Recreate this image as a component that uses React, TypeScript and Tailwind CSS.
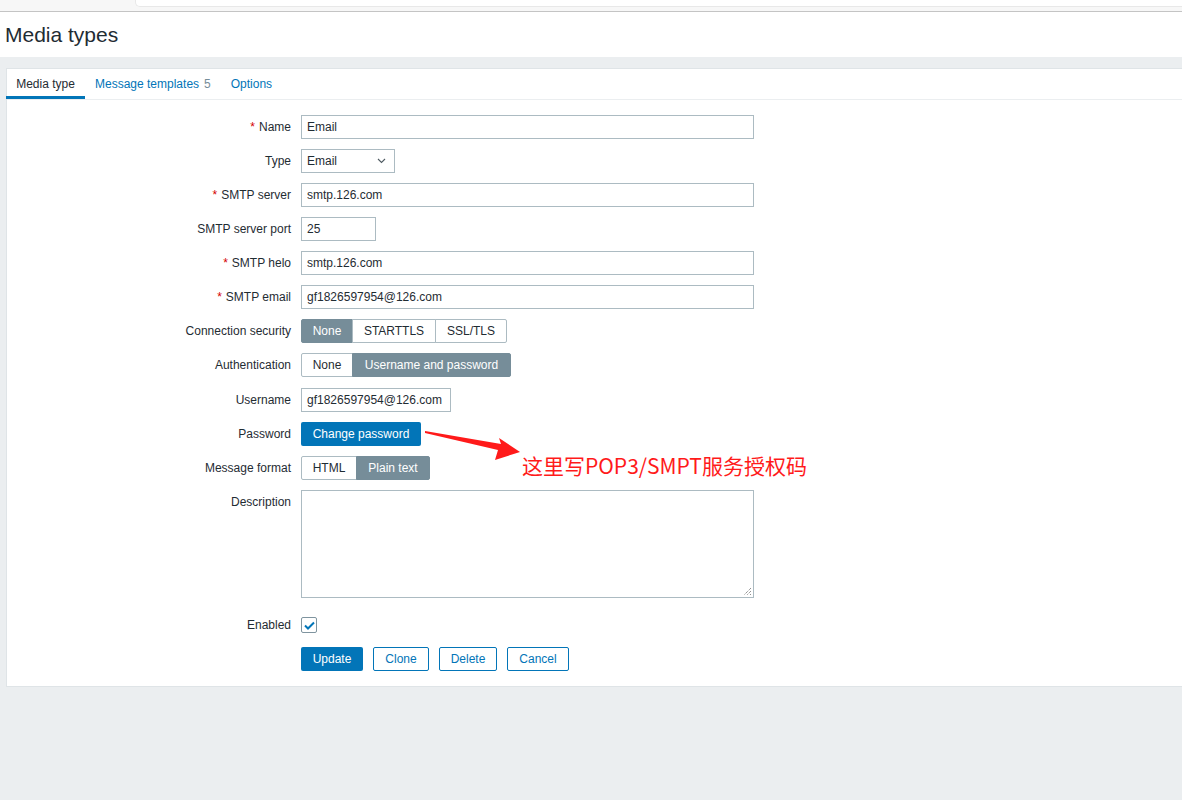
import React from 'react'

const font = { fontFamily: 'Arial, "Liberation Sans", sans-serif' }

function Label({ text, required }: { text: string; required?: boolean }) {
  return (
    <div className="w-[294px] shrink-0 pr-[10px] text-right text-[12px] text-[#1f2c33]">
      {required ? <span className="mr-[4px] text-[#d40000]">*</span> : null}
      {text}
    </div>
  )
}

function TextInput({ value, width }: { value: string; width: string }) {
  return (
    <div className={`flex h-[24px] items-center border border-[#acbbc2] bg-white pl-[5px] text-[12px] text-[#1f2c33] ${width}`}>
      {value}
    </div>
  )
}

function Segmented({ items, active }: { items: Array<{ label: string; w: string }>; active: number }) {
  return (
    <div className="flex h-[24px]">
      {items.map((it, i) => (
        <div
          key={it.label}
          className={`flex items-center justify-center border text-[12px] ${it.w} ${i > 0 ? '-ml-px' : ''} ${
            i === active ? 'border-[#768d99] bg-[#768d99] text-white' : 'border-[#acbbc2] bg-white text-[#1f2c33]'
          } ${i === 0 ? 'rounded-l-[2px]' : ''} ${i === items.length - 1 ? 'rounded-r-[2px]' : ''}`}
        >
          {it.label}
        </div>
      ))}
    </div>
  )
}

function Row({ children, className = '' }: { children: React.ReactNode; className?: string }) {
  return <div className={`flex h-[24px] items-center ${className}`}>{children}</div>
}

export default function App() {
  return (
    <div className="min-h-[800px] w-[1182px] bg-[#ebeef0]" style={font}>
      {/* browser-ish top strip */}
      <div className="flex h-[12px] border-b border-[#c4c4c4] bg-[#f7f7f7]">
        <div className="ml-[135px] h-[7px] flex-1 rounded-bl-[5px] border-b border-l border-[#e8e8e8] bg-white" />
      </div>

      <div className="flex h-[45px] items-center bg-white pl-[5px]">
        <h1 className="text-[21px] text-[#1f2c33]">Media types</h1>
      </div>

      <div className="ml-[6px] mt-[11px] border-b border-l border-t border-[#dfe4e7] bg-white pb-[15px]">
        {/* tabs */}
        <div className="flex h-[31px] border-b border-[#ebeef0] text-[12px]">
          <div className="-ml-px flex w-[79px] items-center justify-center border-b-[3px] border-[#0275b8] pt-[3px] text-[#1f2c33]">
            Media type
          </div>
          <div className="flex items-center border-b-[3px] border-transparent pl-[10px] pt-[3px] text-[#0275b8]">
            Message templates<span className="ml-[5px] text-[#768d99]">5</span>
          </div>
          <div className="flex items-center border-b-[3px] border-transparent pl-[20px] pt-[3px] text-[#0275b8]">Options</div>
        </div>

        <div className="relative flex flex-col gap-[10px] pt-[15px]">
          <Row>
            <Label text="Name" required />
            <TextInput value="Email" width="w-[453px]" />
          </Row>
          <Row>
            <Label text="Type" />
            <div className="flex h-[24px] w-[94px] items-center justify-between border border-[#acbbc2] bg-white pl-[5px] pr-[8px] text-[12px] text-[#1f2c33]">
              Email
              <svg width="9" height="6" viewBox="0 0 9 6" fill="none">
                <path d="M1 1l3.5 3.5L8 1" stroke="#4f5b62" strokeWidth="1.1" />
              </svg>
            </div>
          </Row>
          <Row>
            <Label text="SMTP server" required />
            <TextInput value="smtp.126.com" width="w-[453px]" />
          </Row>
          <Row>
            <Label text="SMTP server port" />
            <TextInput value="25" width="w-[75px]" />
          </Row>
          <Row>
            <Label text="SMTP helo" required />
            <TextInput value="smtp.126.com" width="w-[453px]" />
          </Row>
          <Row>
            <Label text="SMTP email" required />
            <TextInput value="gf1826597954@126.com" width="w-[453px]" />
          </Row>
          <Row>
            <Label text="Connection security" />
            <Segmented
              active={0}
              items={[
                { label: 'None', w: 'w-[52px]' },
                { label: 'STARTTLS', w: 'w-[84px]' },
                { label: 'SSL/TLS', w: 'w-[72px]' },
              ]}
            />
          </Row>
          <Row className="pb-px">
            <Label text="Authentication" />
            <Segmented
              active={1}
              items={[
                { label: 'None', w: 'w-[52px]' },
                { label: 'Username and password', w: 'w-[159px]' },
              ]}
            />
          </Row>
          <Row className="mt-px">
            <Label text="Username" />
            <TextInput value="gf1826597954@126.com" width="w-[150px]" />
          </Row>
          <Row>
            <Label text="Password" />
            <div className="flex h-[24px] w-[120px] items-center justify-center rounded-[2px] bg-[#0275b8] text-[12px] text-white">
              Change password
            </div>
          </Row>
          <Row>
            <Label text="Message format" />
            <Segmented
              active={1}
              items={[
                { label: 'HTML', w: 'w-[56px]' },
                { label: 'Plain text', w: 'w-[74px]' },
              ]}
            />
          </Row>
          <div className="flex">
            <div className="pt-[3px]">
              <Label text="Description" />
            </div>
            <div className="relative h-[108px] w-[453px] border border-[#acbbc2] bg-white">
              <svg className="absolute bottom-[1px] right-[1px]" width="9" height="9" viewBox="0 0 9 9">
                <path d="M8 1L1 8M8 4L4 8M8 7L7 8" stroke="#666" strokeWidth="1" strokeDasharray="1 1" />
              </svg>
            </div>
          </div>
          <Row className="mt-[5px]">
            <Label text="Enabled" />
            <div className="flex h-[16px] w-[16px] items-center justify-center rounded-[2px] border border-[#7f949f] bg-white">
              <svg width="11" height="9" viewBox="0 0 11 9" fill="none">
                <path d="M1 4.5l3 3L10 1.5" stroke="#0275b8" strokeWidth="2" />
              </svg>
            </div>
          </Row>
          <Row>
            <div className="w-[294px] shrink-0" />
            <div className="flex gap-[10px] text-[12px]">
              <div className="flex h-[24px] w-[62px] items-center justify-center rounded-[2px] bg-[#0275b8] text-white">Update</div>
              <div className="flex h-[24px] w-[56px] items-center justify-center rounded-[2px] border border-[#0275b8] bg-white text-[#0275b8]">Clone</div>
              <div className="flex h-[24px] w-[58px] items-center justify-center rounded-[2px] border border-[#0275b8] bg-white text-[#0275b8]">Delete</div>
              <div className="flex h-[24px] w-[62px] items-center justify-center rounded-[2px] border border-[#0275b8] bg-white text-[#0275b8]">Cancel</div>
            </div>
          </Row>

          {/* annotation overlay */}
          <svg className="absolute left-[417px] top-[328px]" width="100" height="36" viewBox="0 0 100 36">
            <polygon points="1,3 77,16 75,10 96,24 71,32 74,22 1,5" fill="#ff1a1a" />
          </svg>
          <div
            className="absolute left-[515px] top-[351px] whitespace-nowrap text-[21px] leading-[28px] text-[#ff1a1a]"
            style={{ fontFamily: '"Noto Sans CJK SC", "Noto Sans", sans-serif' }}
          >
            这里写POP3/SMPT服务授权码
          </div>
        </div>
      </div>
    </div>
  )
}
